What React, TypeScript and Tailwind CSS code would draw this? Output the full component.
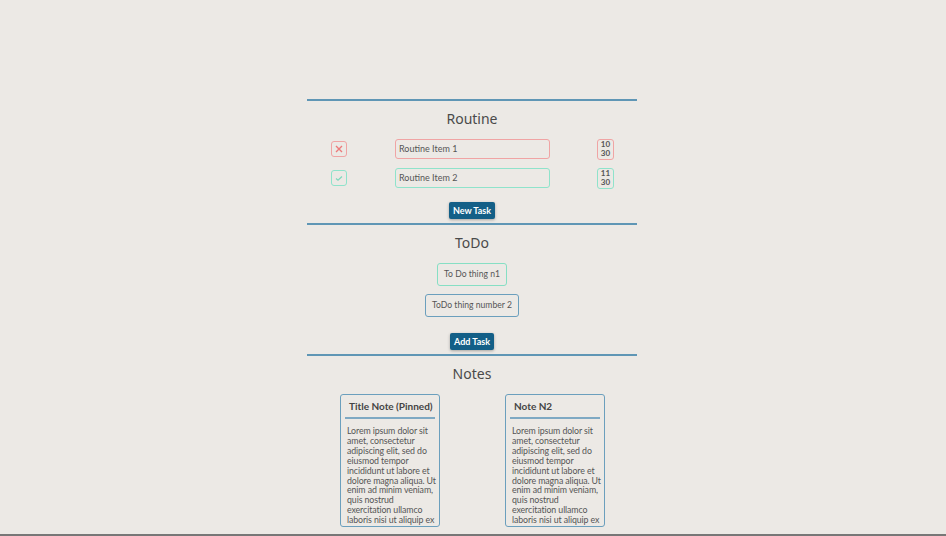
const heading = "font-['Noto_Sans',sans-serif] text-[14px] text-[#4a4a4a]";
const body = "font-['Lato',sans-serif]";

const routine = [
  { name: 'Routine Item 1', done: false, hour: '10', min: '30' },
  { name: 'Routine Item 2', done: true, hour: '11', min: '30' },
];

const todos = [
  { text: 'To Do thing n1', color: 'border-[#86dfc4]' },
  { text: 'ToDo thing number 2', color: 'border-[#6b9fbd]' },
];

const lorem =
  'Lorem ipsum dolor sit amet, consectetur adipiscing elit, sed do eiusmod tempor incididunt ut labore et dolore magna aliqua. Ut enim ad minim veniam, quis nostrud exercitation ullamco laboris nisi ut aliquip ex';

const notes = ['Title Note (Pinned)', 'Note N2'];

function StatusBox({ done }: { done: boolean }) {
  return (
    <div
      className={`flex h-4 w-4 items-center justify-center rounded-[3px] border ${
        done ? 'border-[#8fe3cb]' : 'border-[#f0a4a4]'
      }`}
    >
      {done ? (
        <svg width="10" height="10" viewBox="0 0 10 10">
          <path d="M2 5.5 L4 7.2 L8 3.6" fill="none" stroke="#7fd8bd" strokeWidth="1.3" />
        </svg>
      ) : (
        <svg width="10" height="10" viewBox="0 0 10 10">
          <path d="M2 2 L8 8 M8 2 L2 8" fill="none" stroke="#ec7a7a" strokeWidth="1.4" />
        </svg>
      )}
    </div>
  );
}

function TaskButton({ label }: { label: string }) {
  return (
    <button
      type="button"
      className={`${body} block h-[17px] rounded-[2px] bg-[#135f87] px-[4px] text-[9px] font-bold leading-[17px] text-white shadow-[0_1px_3px_rgba(0,0,0,0.3)]`}
    >
      {label}
    </button>
  );
}

export default function App() {
  return (
    <div className="flex h-[536px] w-full flex-col overflow-hidden bg-[#ece9e5]">
      <main className="flex-1 overflow-hidden pt-[99px]">
        <div className="mx-auto w-[330px] -translate-x-[1px]">
          {/* Routine */}
          <section className="flex flex-col items-center border-t-2 border-[#5f96b5] pb-[4px]">
            <h2 className={`${heading} mt-[8px] leading-[20px]`}>Routine</h2>
            <div className="mt-[10px] flex w-full flex-col gap-[9px]">
              {routine.map((item) => (
                <div key={item.name} className="flex h-5 items-center">
                  <div className="ml-[24px]">
                    <StatusBox done={item.done} />
                  </div>
                  <div
                    className={`${body} ml-[48px] flex h-5 w-[155px] items-center rounded-[3px] border px-[3px] text-[9px] text-[#555] ${
                      item.done ? 'border-[#8fe3cb]' : 'border-[#f0a4a4]'
                    }`}
                  >
                    {item.name}
                  </div>
                  <div
                    className={`${body} ml-[47px] flex h-[21px] w-[17px] flex-col items-center justify-center rounded-[3px] border text-[8px] font-bold leading-[9px] text-[#555] ${
                      item.done ? 'border-[#8fe3cb]' : 'border-[#f0a4a4]'
                    }`}
                  >
                    <span>{item.hour}</span>
                    <span>{item.min}</span>
                  </div>
                </div>
              ))}
            </div>
            <div className="mt-[14px] flex">
              <TaskButton label="New Task" />
            </div>
          </section>

          {/* ToDo */}
          <section className="flex flex-col items-center border-t-2 border-[#5f96b5] pb-[4px]">
            <h2 className={`${heading} mt-[8px] leading-[20px]`}>ToDo</h2>
            <div className="mt-[10px] flex flex-col items-center gap-[8px]">
              {todos.map((t) => (
                <div
                  key={t.text}
                  className={`${body} flex h-[23px] items-center rounded-[3px] border px-[6px] text-[8.6px] text-[#555] ${t.color}`}
                >
                  {t.text}
                </div>
              ))}
            </div>
            <div className="mt-[16px] flex">
              <TaskButton label="Add Task" />
            </div>
          </section>

          {/* Notes */}
          <section className="flex flex-col items-center border-t-2 border-[#5f96b5]">
            <h2 className={`${heading} mt-[8px] leading-[20px]`}>Notes</h2>
            <div className="mt-[10px] flex w-full justify-between pl-[33px] pr-[32px]">
              {notes.map((title) => (
                <div
                  key={title}
                  className="h-[133px] w-[100px] overflow-hidden rounded-[3px] border border-[#6b9fbd]"
                >
                  <h3 className={`${body} pl-[8px] pt-[4px] text-[10px] font-bold leading-[14px] text-[#444]`}>
                    {title}
                  </h3>
                  <div className="mx-[4px] mt-[4px] h-[2px] bg-[#7fa9c3]" />
                  <p className={`${body} pl-[6px] pr-0 pt-[7px] text-[8.8px] leading-[9.9px] tracking-[-0.1px] text-[#555]`}>
                    {lorem}
                  </p>
                </div>
              ))}
            </div>
          </section>
        </div>
      </main>
      <div className="h-[2px] w-full bg-[#777]" />
    </div>
  );
}
